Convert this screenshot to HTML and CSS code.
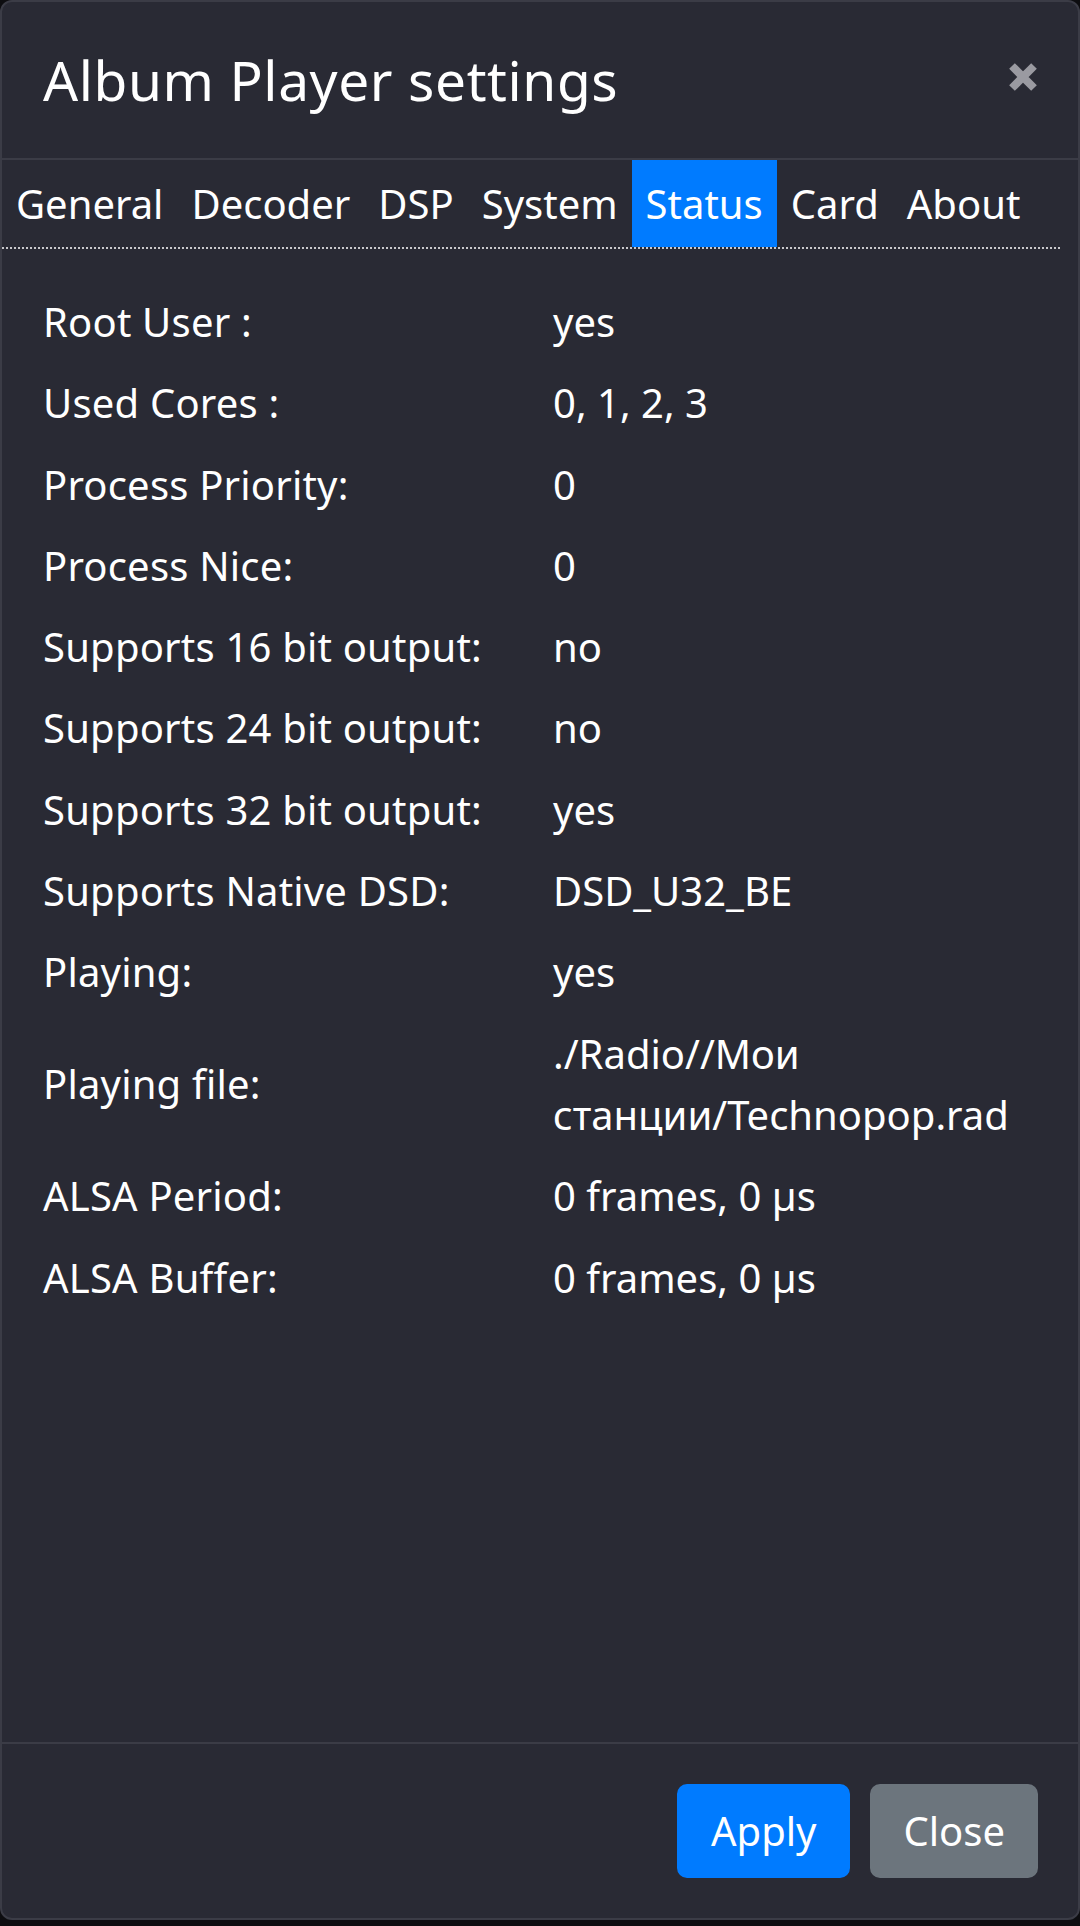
FILE: index.html
```html
<!DOCTYPE html>
<html lang="en">
<head>
<meta charset="utf-8">
<title>Album Player settings</title>
<link rel="stylesheet" href="styles.css">
</head>
<body>
<div class="dialog">
  <div class="dialog-header">
    <h4 class="dialog-title">Album Player settings</h4>
    <button class="close-x" aria-label="Close">
      <svg width="32" height="32" viewBox="0 0 32 32"><path d="M5 5 L27 27 M27 5 L5 27" stroke="#9a9aa1" stroke-width="8" fill="none"/></svg>
    </button>
  </div>
  <nav class="tabs">
    <span class="tab">General</span>
    <span class="tab">Decoder</span>
    <span class="tab">DSP</span>
    <span class="tab">System</span>
    <span class="tab active">Status</span>
    <span class="tab">Card</span>
    <span class="tab">About</span>
  </nav>
  <div class="dialog-body">
    <div class="status-grid">
      <div class="label">Root User :</div><div class="value">yes</div>
      <div class="label">Used Cores :</div><div class="value">0, 1, 2, 3</div>
      <div class="label">Process Priority:</div><div class="value">0</div>
      <div class="label">Process Nice:</div><div class="value">0</div>
      <div class="label">Supports 16 bit output:</div><div class="value">no</div>
      <div class="label">Supports 24 bit output:</div><div class="value">no</div>
      <div class="label">Supports 32 bit output:</div><div class="value">yes</div>
      <div class="label">Supports Native DSD:</div><div class="value">DSD_U32_BE</div>
      <div class="label">Playing:</div><div class="value">yes</div>
      <div class="label">Playing file:</div><div class="value">./Radio//Мои станции/Technopop.rad</div>
      <div class="label">ALSA Period:</div><div class="value">0 frames, 0 µs</div>
      <div class="label">ALSA Buffer:</div><div class="value">0 frames, 0 µs</div>
    </div>
  </div>
  <div class="dialog-footer">
    <button class="btn btn-primary">Apply</button>
    <button class="btn btn-secondary">Close</button>
  </div>
</div>
</body>
</html>
```
FILE: styles.css
```css
* { box-sizing: border-box; }
html, body {
  margin: 0;
  padding: 0;
  background: #0d0d10;
}
body {
  width: 1080px;
  height: 1926px;
  font-family: "Noto Sans", "Open Sans", sans-serif;
  font-size: 40px;
  line-height: 60px;
  color: #ffffff;
}
.dialog {
  width: 1080px;
  height: 1920px;
  background: #292a34;
  border: 2px solid #3b3c46;
  border-radius: 12px;
  display: flex;
  flex-direction: column;
  overflow: hidden;
}
.dialog-header {
  display: flex;
  align-items: center;
  justify-content: space-between;
  padding: 36px 39px 36px 41px;
  border-bottom: 2px solid #3b3c46;
}
.dialog-title {
  margin: 0;
  font-size: 55px;
  font-weight: 400;
  line-height: 84px;
  letter-spacing: 0.6px;
}
.close-x {
  background: none;
  border: 0;
  padding: 0;
  width: 32px;
  height: 32px;
  display: flex;
  margin-top: -6px;
}
.tabs {
  display: flex;
  margin-right: 18px;
  border-bottom: 2px dotted #c8c8cc;
}
.tab {
  padding: 13.5px 14px;
  line-height: 60px;
  color: #ffffff;
}
.tab.active {
  background: #007bff;
}
.dialog-body {
  flex: 1;
  padding: 32px 40px 0 41px;
}
.status-grid {
  display: grid;
  grid-template-columns: 510px 1fr;
  align-items: center;
}
.label, .value {
  padding: 10px 0;
  line-height: 61.3px;
}
.label {
  letter-spacing: 0.2px;
}
.dialog-footer {
  display: flex;
  justify-content: flex-end;
  padding: 30px;
  border-top: 2px solid #3b3c46;
}
.btn {
  font-family: inherit;
  font-size: 40px;
  line-height: 60px;
  color: #ffffff;
  padding: 15px 32px;
  border: 2px solid transparent;
  border-radius: 10px;
  margin: 10px;
}
.btn-primary { background: #007bff; border-color: #007bff; }
.btn-secondary { background: #6c757d; border-color: #6c757d; padding: 15px 31px; }
```
